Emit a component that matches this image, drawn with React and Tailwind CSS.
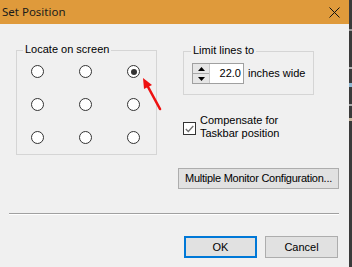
import React from 'react';

const font = { fontFamily: '"Liberation Sans", Arial, sans-serif' };

// Windows-style radio
const Radio = ({ checked }) => (
  <div className="w-[13px] h-[13px] rounded-full border border-[#333333] bg-white flex items-center justify-center">
    {checked && <div className="w-[6px] h-[6px] rounded-full bg-[#333333]" />}
  </div>
);

const GroupLabel = ({ children, left }) => (
  <div className={`absolute top-[-8px] ${left} px-[2px] bg-[#f0f0f0] text-[11px] leading-[13px] text-black`}>
    {children}
  </div>
);

const Spinner = () => (
  <div className="flex w-[52px] h-[21px] border border-[#a0a0a0] bg-white">
    <div className="w-[17px] h-full flex flex-col border-r border-[#c8c8c8] bg-[#e6e6e6]">
      <div className="flex-1 flex items-center justify-center border-b border-[#a8a8a8]">
        <svg width="7" height="4" viewBox="0 0 7 4"><path d="M3.5 0 L7 4 L0 4 Z" fill="#000" /></svg>
      </div>
      <div className="flex-1 flex items-center justify-center">
        <svg width="7" height="4" viewBox="0 0 7 4"><path d="M0 0 L7 0 L3.5 4 Z" fill="#000" /></svg>
      </div>
    </div>
    <div className="flex-1 flex items-center justify-end pr-[2px] text-[11px]">22.0</div>
  </div>
);

export default function App() {
  return (
    <div className="flex w-[352px] h-[267px] overflow-hidden text-black" style={font}>
      <div className="w-[349px] h-full flex flex-col bg-[#f0f0f0]">
        {/* Title bar */}
        <div className="h-[24px] bg-[#df9a3b] flex items-center justify-between pl-[2px] pr-[9px]">
          <span className="text-[11.5px] text-[#1a1a1a]" style={{ fontFamily: '"Noto Sans", "Liberation Sans", sans-serif' }}>Set Position</span>
          <svg width="11" height="11" viewBox="0 0 11 11">
            <path d="M0.5 0.5 L10.5 10.5 M10.5 0.5 L0.5 10.5" stroke="#111" strokeWidth="1" />
          </svg>
        </div>

        {/* Body */}
        <div className="flex-1 flex flex-col relative">
          <div className="flex pt-[26px] pl-[16px]">
            {/* Locate on screen */}
            <div className="relative w-[141px] h-[105px] border border-[#d5d5d5]">
              <GroupLabel left="left-[6px]">Locate on screen</GroupLabel>
              <div className="pt-[14px] pl-[14px] flex flex-col gap-[20px]">
                {[0, 1, 2].map((r) => (
                  <div key={r} className="flex gap-[35px]">
                    {[0, 1, 2].map((c) => (
                      <Radio key={c} checked={r === 0 && c === 2} />
                    ))}
                  </div>
                ))}
              </div>
            </div>

            {/* Right column */}
            <div className="ml-[26px] flex flex-col">
              <div className="relative mt-[1px] w-[131px] h-[44px] border border-[#d5d5d5]">
                <GroupLabel left="left-[7px]">Limit lines to</GroupLabel>
                <div className="flex items-center pt-[11px] pl-[8px]">
                  <Spinner />
                  <span className="ml-[4px] text-[11px]">inches wide</span>
                </div>
              </div>

              <div className="mt-[19px] flex items-center">
                <div className="w-[13px] h-[13px] mt-[3px] border border-[#333333] bg-white flex items-center justify-center">
                  <svg width="9" height="8" viewBox="0 0 9 8">
                    <path d="M0.8 4 L3.3 6.5 L8.3 1" stroke="#707070" strokeWidth="1.3" fill="none" />
                  </svg>
                </div>
                <div className="ml-[4px] text-[11px] leading-[13px]">
                  Compensate for
                  <br />
                  Taskbar position
                </div>
              </div>

              <button className="mt-[28px] -ml-[5px] w-[161px] h-[21px] bg-[#e1e1e1] border border-[#adadad] text-[11px] tracking-[-0.25px] whitespace-nowrap flex items-center justify-center">
                Multiple Monitor Configuration...
              </button>
            </div>
          </div>

          {/* Separator */}
          <div className="mt-[24px] ml-[9px] w-[330px] h-[1px] bg-[#a0a0a0]" />
          <div className="ml-[9px] w-[330px] h-[1px] bg-white" />

          {/* Buttons */}
          <div className="mt-[21px] flex justify-end gap-[8px] pr-[11px]">
            <button className="w-[73px] h-[22px] bg-[#e1e1e1] border-2 border-[#0078d7] text-[11px] flex items-center justify-center">
              OK
            </button>
            <button className="w-[73px] h-[22px] bg-[#e1e1e1] border border-[#adadad] text-[11px] flex items-center justify-center">
              Cancel
            </button>
          </div>

          {/* Red annotation arrow */}
          <svg className="absolute left-[138px] top-[52px]" width="28" height="36" viewBox="0 0 28 36">
            <path d="M22 33 L9 9" stroke="#ee1111" strokeWidth="2.6" strokeLinecap="round" />
            <path d="M5 2 L14 9 L6 13 Z" fill="#ee1111" />
          </svg>
        </div>
      </div>

      {/* Background window strip */}
      <div className="w-[3px] h-full bg-[#3a3a3a] flex flex-col">
        <div className="mt-[29px] h-[2px] bg-[#9a9a9a]" />
        <div className="mt-[36px] h-[2px] bg-[#b0b0b0]" />
        <div className="mt-[14px] h-[4px] bg-[#8fb6d0]" />
        <div className="mt-[17px] h-[2px] bg-[#a8a8a8]" />
        <div className="mt-[12px] h-[3px] bg-[#c8b8a0]" />
      </div>
    </div>
  );
}
